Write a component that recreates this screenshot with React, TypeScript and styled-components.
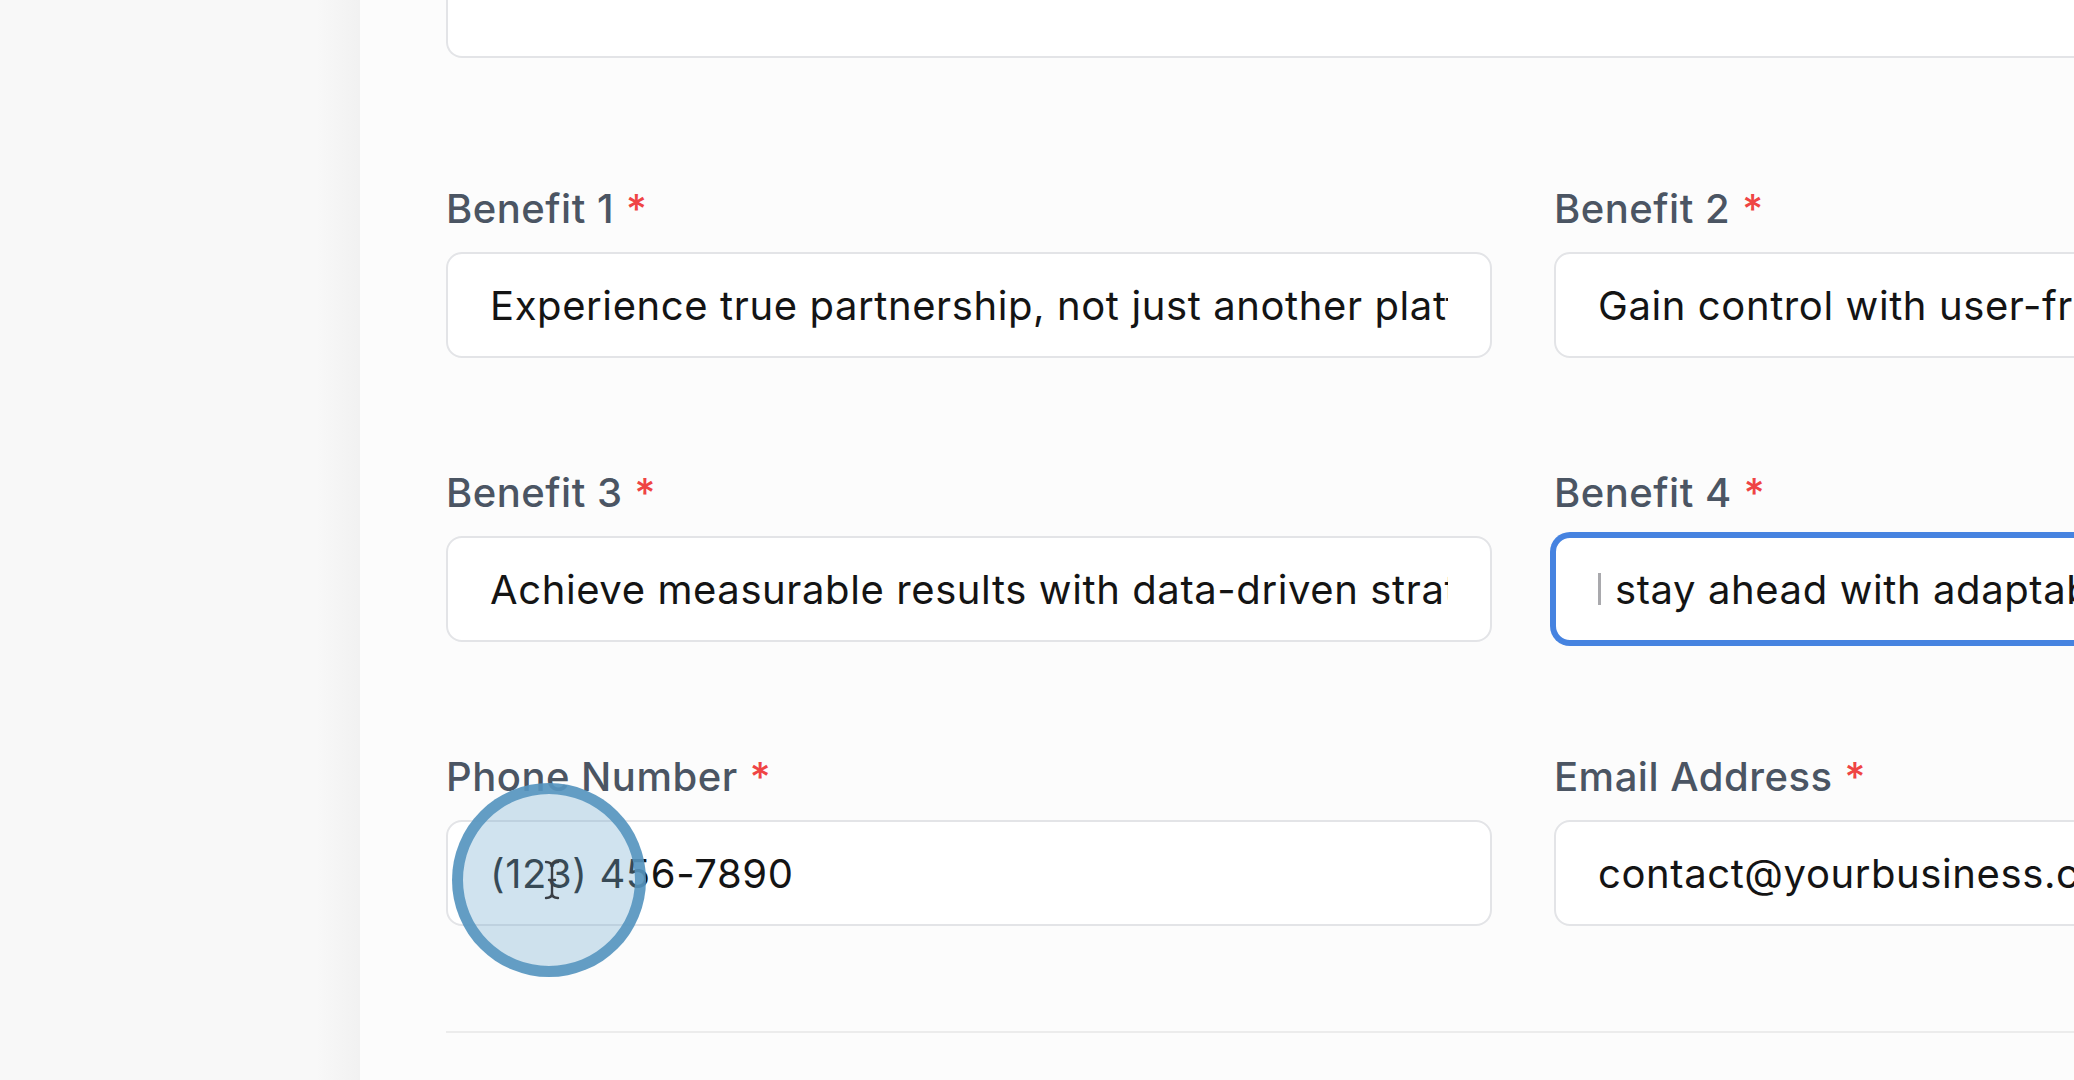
import React from "react";
import styled, { createGlobalStyle } from "styled-components";

const GlobalStyle = createGlobalStyle`
  html, body {
    margin: 0;
    padding: 0;
    overflow: hidden;
    background: #fcfcfc;
    font-family: Inter, "Noto Sans", "Liberation Sans", sans-serif;
  }
`;

const Screen = styled.div`
  display: flex;
  width: 2074px;
  height: 1080px;
  overflow: hidden;
`;

const Sidebar = styled.aside`
  flex: 0 0 360px;
  background: linear-gradient(to right, #f8f8f8 0%, #f8f8f8 88%, #f1f1f1 100%);
`;

const Main = styled.main`
  position: relative;
  flex: 1;
  overflow: hidden;
  background: #fcfcfc;
  padding-left: 86px;
`;

const Form = styled.div`
  width: 2154px;
  display: flex;
  flex-direction: column;
`;

const TextareaTail = styled.div`
  height: 58px;
  box-sizing: border-box;
  border: 2px solid #e3e4e7;
  border-top: none;
  border-radius: 0 0 16px 16px;
  background: #fff;
`;

const Grid = styled.div`
  margin-top: 128px;
  display: grid;
  grid-template-columns: 1046px 1046px;
  column-gap: 62px;
  row-gap: 112px;
`;

const Field = styled.div`
  display: flex;
  flex-direction: column;
  gap: 20px;
`;

const Label = styled.label`
  font-size: 40px;
  line-height: 46px;
  font-weight: 500;
  letter-spacing: 0.5px;
  color: #4b5563;
  white-space: nowrap;
`;

const Required = styled.span`
  color: #ef4444;
  margin-left: 0.3em;
`;

const InputBox = styled.div<{ $focused?: boolean }>`
  height: 106px;
  box-sizing: border-box;
  display: flex;
  align-items: center;
  gap: 14px;
  padding: 0 42px;
  background: #fff;
  border-radius: 16px;
  border: 2px solid ${(p) => (p.$focused ? "#4683e0" : "#e3e4e7")};
  box-shadow: ${(p) => (p.$focused ? "0 0 0 4px #4683e0" : "none")};
  overflow: hidden;
`;

const Caret = styled.span`
  flex: 0 0 3px;
  height: 32px;
  background: #a9a9ad;
`;

const TextInput = styled.input`
  flex: 1;
  min-width: 0;
  border: none;
  outline: none;
  padding: 0;
  margin: 0;
  background: transparent;
  font-family: inherit;
  font-size: 40px;
  font-weight: 400;
  letter-spacing: 0.6px;
  color: #141414;
`;

const Divider = styled.hr`
  margin: 105px 0 0;
  border: none;
  height: 2px;
  background: #ececec;
`;

const ClickHighlight = styled.div`
  position: absolute;
  left: 92px;
  top: 783px;
  width: 194px;
  height: 194px;
  box-sizing: border-box;
  border-radius: 50%;
  border: 11px solid rgba(84, 148, 190, 0.88);
  background: rgba(120, 176, 210, 0.35);
  display: flex;
  align-items: center;
  justify-content: center;
  pointer-events: none;
`;

const IBeam = () => (
  <svg width="16" height="40" viewBox="0 0 16 40" style={{ marginLeft: 6 }}>
    <path
      d="M2 2 Q8 2 8 7 L8 33 Q8 38 2 38 M14 2 Q8 2 8 7 M8 33 Q8 38 14 38 M5 20 L11 20"
      fill="none"
      stroke="#3a3f45"
      strokeWidth="2.4"
      strokeLinecap="round"
    />
  </svg>
);

type FieldDef = {
  label: string;
  value: string;
  focused?: boolean;
};

const fields: FieldDef[] = [
  { label: "Benefit 1", value: "Experience true partnership, not just another platform" },
  { label: "Benefit 2", value: "Gain control with user-friendly tools and transparent reporting" },
  { label: "Benefit 3", value: "Achieve measurable results with data-driven strategies" },
  { label: "Benefit 4", value: "stay ahead with adaptable strategies for your market", focused: true },
  { label: "Phone Number", value: "(123) 456-7890" },
  { label: "Email Address", value: "contact@yourbusiness.com" },
];

export default function App() {
  return (
    <>
      <GlobalStyle />
      <Screen>
        <Sidebar />
        <Main>
          <Form>
            <TextareaTail />
            <Grid>
              {fields.map((f) => (
                <Field key={f.label}>
                  <Label>
                    {f.label}
                    <Required>*</Required>
                  </Label>
                  <InputBox $focused={f.focused}>
                    {f.focused && <Caret />}
                    <TextInput readOnly value={f.value} />
                  </InputBox>
                </Field>
              ))}
            </Grid>
            <Divider />
          </Form>
          <ClickHighlight>
            <IBeam />
          </ClickHighlight>
        </Main>
      </Screen>
    </>
  );
}
